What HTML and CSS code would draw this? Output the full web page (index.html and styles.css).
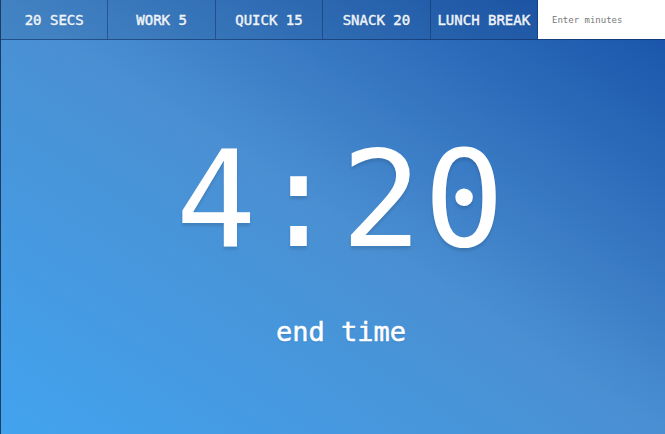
FILE: index.html
```html
<!DOCTYPE html>
<html>
<head>
<meta charset="utf-8">
<link rel="stylesheet" href="styles.css">
</head>
<body>
<div class="page">
  <nav class="timer-controls">
    <button class="timer-btn">20 SECS</button>
    <button class="timer-btn">WORK 5</button>
    <button class="timer-btn">QUICK 15</button>
    <button class="timer-btn">SNACK 20</button>
    <button class="timer-btn">LUNCH BREAK</button>
    <form class="custom-form"><input class="custom-input" type="text" placeholder="Enter minutes"></form>
  </nav>
  <main class="display">
    <h1 class="time-left">4:20</h1>
    <p class="end-time">end time</p>
  </main>
</div>
</body>
</html>
```
FILE: styles.css
```css
html, body {
  margin: 0;
  padding: 0;
  height: 100%;
}
body {
  font-family: "DejaVu Sans Mono", "Liberation Mono", monospace;
  color: #fff;
}
.page {
  height: 100%;
  box-sizing: border-box;
  border-left: 1px solid #1c3c63;
  background: linear-gradient(to top right, #42a3ee 0%, #4a8fd2 50%, #1650a7 100%);
  display: flex;
  flex-direction: column;
}
.timer-controls {
  display: grid;
  grid-template-columns: repeat(5, 1fr) 127px;
  height: 40px;
  box-sizing: border-box;
  border-bottom: 1px solid rgba(10, 40, 90, 0.55);
  background: rgba(0, 20, 60, 0.1);
}
.timer-btn {
  font-family: inherit;
  font-size: 14px;
  font-weight: normal;
  -webkit-text-stroke: 0.45px #eef4fb;
  color: #eef4fb;
  background: transparent;
  border: 0;
  border-right: 1px solid rgba(10, 40, 90, 0.45);
  padding: 0;
  margin: 0;
  text-shadow: 0 1px 1px rgba(0,0,0,0.15);
}
.custom-form {
  margin: 0;
  display: flex;
}
.custom-input {
  flex: 1;
  width: 100%;
  border: 0;
  margin: 0;
  padding: 0 0 0 14px;
  background: #fff;
  font-family: inherit;
  font-size: 9px;
  color: #333;
  outline: none;
}
.custom-input::placeholder {
  color: #777;
}
.display {
  flex: 1;
  display: flex;
  flex-direction: column;
  align-items: center;
  padding-top: 93px;
  padding-left: 16px;
}
.time-left {
  margin: 0;
  font-size: 134px;
  font-weight: normal;
  letter-spacing: 2px;
  line-height: 1;
  text-shadow: 0 3px 3px rgba(0, 0, 0, 0.12);
}
.end-time {
  margin: 51px 0 0;
  font-size: 27px;
  line-height: 1;
  -webkit-text-stroke: 0.5px #fff;
  text-shadow: 0 1px 2px rgba(0, 0, 0, 0.12);
}
```
